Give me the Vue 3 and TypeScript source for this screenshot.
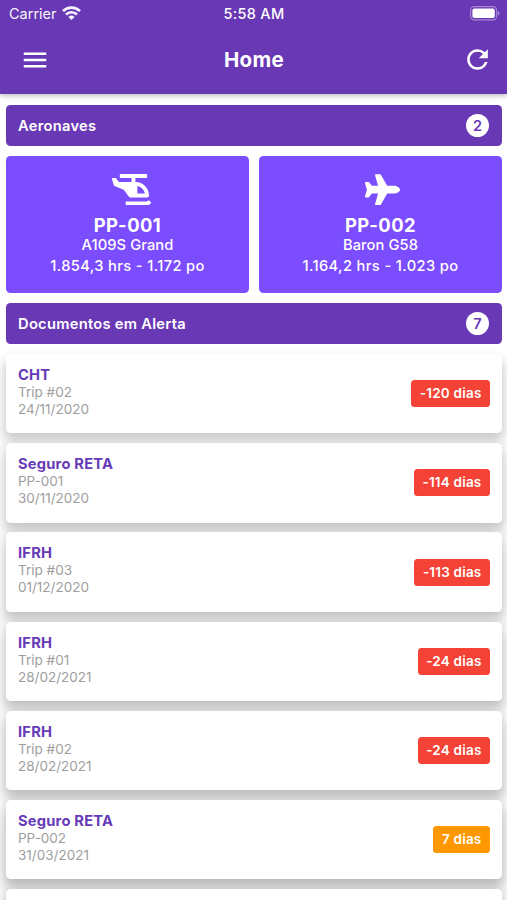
<script setup lang="ts">
interface Aircraft {
  id: string
  model: string
  usage: string
  kind: 'helicopter' | 'plane'
  viewBox: string
  width: number
  icon: string
}

interface AlertDocument {
  title: string
  owner: string
  date: string
  days: string
  level: 'expired' | 'warning'
}

const helicopter =
  'M304 384h272c17.67 0 32-14.33 32-32 0-123.71-100.29-224-224-224V64h176c8.84 0 16-7.16 16-16V16c0-8.84-7.16-16-16-16H144c-8.84 0-16 7.16-16 16v32c0 8.84 7.16 16 16 16h176v64H112L68.8 70.4C65.78 66.37 61.03 64 56 64H16.01C5.6 64-2.04 73.78.49 83.88L32 192l160 64 86.4 115.2A31.992 31.992 0 0 0 304 384zm112-188.49C478.55 208.3 528.03 257.44 540.79 320H416V195.51zm219.37 263.3l-22.15-22.2c-6.25-6.26-16.24-6.1-22.64.01-7.09 6.77-13.84 11.25-24.64 11.25H240c-8.84 0-16 7.18-16 16.03v32.06c0 8.85 7.16 16.03 16 16.03h325.94c14.88 0 35.3-.47 68.45-29.52 7.02-6.14 7.57-17.05.98-23.66z'
const plane =
  'M480 192H365.71L260.61 8.06A16.014 16.014 0 0 0 246.71 0h-65.5c-10.63 0-18.3 10.17-15.38 20.39L214.86 192H112l-43.2-57.6c-3.02-4.03-7.77-6.4-12.8-6.4H16.01C5.6 128-2.04 137.78.49 147.88L32 256 .49 364.12C-2.04 374.22 5.6 384 16.01 384H56c5.04 0 9.78-2.37 12.8-6.4L112 320h102.86l-49.03 171.6c-2.92 10.22 4.75 20.4 15.38 20.4h65.5c5.74 0 11.04-3.08 13.89-8.06L365.71 320H480c35.35 0 96-28.65 96-64s-60.65-64-96-64z'

const fleet: Aircraft[] = [
  { id: 'PP-001', model: 'A109S Grand', usage: '1.854,3 hrs - 1.172 po', kind: 'helicopter', viewBox: '0 0 640 512', width: 39, icon: helicopter },
  { id: 'PP-002', model: 'Baron G58', usage: '1.164,2 hrs - 1.023 po', kind: 'plane', viewBox: '0 0 576 512', width: 35, icon: plane },
]

const documents: AlertDocument[] = [
  { title: 'CHT', owner: 'Trip #02', date: '24/11/2020', days: '-120 dias', level: 'expired' },
  { title: 'Seguro RETA', owner: 'PP-001', date: '30/11/2020', days: '-114 dias', level: 'expired' },
  { title: 'IFRH', owner: 'Trip #03', date: '01/12/2020', days: '-113 dias', level: 'expired' },
  { title: 'IFRH', owner: 'Trip #01', date: '28/02/2021', days: '-24 dias', level: 'expired' },
  { title: 'IFRH', owner: 'Trip #02', date: '28/02/2021', days: '-24 dias', level: 'expired' },
  { title: 'Seguro RETA', owner: 'PP-002', date: '31/03/2021', days: '7 dias', level: 'warning' },
]

// Shadows deepen slightly the further down the screen a card sits.
const shade = (index: number) => ({ '--shade': (0.13 + index * 0.014).toFixed(3) })
</script>

<template>
  <div class="screen">
    <header class="header">
      <div class="status">
        <div class="carrier">
          <span>Carrier</span>
          <svg class="wifi" width="19" height="14" viewBox="0 0 19 14">
            <g fill="none" stroke="#fff" stroke-width="2.7">
              <path d="M1 5.100a12.200 12.200 0 0 1 17 0" />
              <path d="M4 8.500a7.800 7.800 0 0 1 11 0" />
            </g>
            <path fill="#fff" d="M6.400 10.900a4.500 4.500 0 0 1 6.200 0L9.500 14z" />
          </svg>
        </div>
        <span class="time">5:58 AM</span>
        <svg class="battery" width="30" height="15" viewBox="0 0 30 15">
          <rect x=".6" y=".6" width="26" height="13.300" rx="3.600" fill="none" stroke="#fff" stroke-opacity=".4" stroke-width="1.100" />
          <rect x="2.400" y="2.500" width="22.400" height="9.600" rx="2" fill="#fff" />
          <path d="M27.800 5c2 1 2 3.600 0 4.600z" fill="#fff" fill-opacity=".5" />
        </svg>
      </div>
      <div class="toolbar">
        <svg class="tool" width="30" height="30" viewBox="0 0 24 24"><path d="M3 18h18v-2H3v2zm0-5h18v-2H3v2zm0-7v2h18V6H3z" /></svg>
        <h1>Home</h1>
        <svg class="tool refresh" width="31" height="31" viewBox="0 0 24 24"><path d="M17.650 6.350A7.958 7.958 0 0 0 12 4c-4.420 0-7.990 3.580-7.990 8s3.570 8 7.990 8c3.730 0 6.840-2.550 7.730-6h-2.080A5.990 5.990 0 0 1 12 18c-3.310 0-6-2.690-6-6s2.690-6 6-6c1.660 0 3.140.690 4.220 1.780L13 11h7V4l-2.350 2.350z" /></svg>
      </div>
    </header>

    <main class="content">
      <div class="section">
        <h2>Aeronaves</h2>
        <span class="count">2</span>
      </div>
      <div class="fleet">
        <article v-for="a in fleet" :key="a.id" class="aircraft">
          <svg :class="a.kind" :width="a.width" height="31.4" :viewBox="a.viewBox"><path :d="a.icon" /></svg>
          <h3>{{ a.id }}</h3>
          <p class="model">{{ a.model }}</p>
          <p class="usage">{{ a.usage }}</p>
        </article>
      </div>
      <div class="section">
        <h2>Documentos em Alerta</h2>
        <span class="count">7</span>
      </div>
      <div class="documents">
        <article v-for="(d, i) in documents" :key="i" class="document" :style="shade(i)">
          <div>
            <h4>{{ d.title }}</h4>
            <p>{{ d.owner }}</p>
            <p>{{ d.date }}</p>
          </div>
          <span class="badge" :class="d.level">{{ d.days }}</span>
        </article>
        <article class="document" :style="shade(documents.length)"></article>
      </div>
    </main>
  </div>
</template>

<style>
body {
  background: #fff;
  overflow: hidden;
}
</style>

<style scoped>
.screen {
  height: 900px;
  overflow: hidden;
  background: #fff;
  color: #fff;
  font-family: Inter, 'Liberation Sans', sans-serif;
}
h1, h2, h3, h4, p {
  margin: 0;
}
.header {
  height: 93.800px;
  box-sizing: border-box;
  background: #6938b5;
  box-shadow: 0 2px 5px rgba(0, 0, 0, 0.25);
}
.status {
  display: grid;
  grid-template-columns: 1fr auto 1fr;
  align-items: center;
  height: 27px;
  padding: 0 7px 0 9px;
  font-size: 14.500px;
}
.carrier {
  display: flex;
  align-items: center;
  gap: 5px;
  opacity: 0.95;
}
.wifi {
  margin-top: -2px;
}
.time {
  margin-left: -1px;
  font-weight: 500;
  letter-spacing: 0.300px;
}
.battery {
  justify-self: end;
}
.toolbar {
  display: grid;
  grid-template-columns: 1fr auto 1fr;
  align-items: center;
  height: 65.600px;
  padding: 0 14px 0 20px;
}
.tool {
  fill: #fff;
}
.refresh {
  justify-self: end;
}
h1 {
  margin-left: -5px;
  font-size: 20.500px;
  line-height: 26px;
  font-weight: 700;
  letter-spacing: 0.300px;
}
.content {
  display: flex;
  flex-direction: column;
  gap: 9.700px;
  padding: 11px 5px 0 6px;
}
.section {
  position: relative;
  z-index: 1;
  display: flex;
  align-items: center;
  justify-content: space-between;
  height: 41.700px;
  box-sizing: border-box;
  padding: 0 13px 0 12px;
  border-radius: 4.500px;
  background: #6938b5;
}
h2 {
  font-size: 14.700px;
  line-height: 18px;
  font-weight: 600;
  letter-spacing: 0.280px;
}
.count {
  display: grid;
  place-items: center;
  width: 23px;
  height: 23px;
  border-radius: 50%;
  background: #fff;
  color: #6938b5;
  font-size: 14.500px;
  line-height: 22px;
  font-weight: 600;
}
.fleet {
  display: grid;
  grid-template-columns: 1fr 1fr;
  gap: 10px;
}
.aircraft {
  display: flex;
  flex-direction: column;
  align-items: center;
  height: 136.800px;
  box-sizing: border-box;
  padding-top: 17.600px;
  border-radius: 4.500px;
  background: #7c4dff;
}
.aircraft svg {
  fill: #fff;
}
.helicopter {
  padding-left: 7px;
}
.plane {
  padding-left: 3px;
}
h3 {
  margin-top: 9px;
  font-size: 18.400px;
  line-height: 22px;
  font-weight: 700;
  letter-spacing: 0.450px;
}
.model,
.usage {
  font-size: 14.700px;
  line-height: 18px;
  font-weight: 500;
  letter-spacing: 0.080px;
}
.usage {
  margin-top: 3px;
  letter-spacing: 0.360px;
}
.documents {
  display: flex;
  flex-direction: column;
  gap: 9.900px;
  isolation: isolate;
}
.document {
  position: relative;
  display: flex;
  flex: none;
  justify-content: space-between;
  align-items: center;
  height: 79.300px;
  box-sizing: border-box;
  padding: 0 12px;
  border-radius: 5px;
  background: #fff;
}
/* Painted beneath every card, so a shadow never tints its neighbour. */
.document::before {
  content: '';
  position: absolute;
  inset: 0;
  z-index: -1;
  border-radius: 5px;
  box-shadow:
    0 10px 14px 3px rgba(0, 0, 0, var(--shade)),
    0 4px 8px rgba(0, 0, 0, 0.100);
}
.document > div {
  padding-bottom: 3.400px;
}
h4 {
  font-size: 14.700px;
  line-height: 18px;
  font-weight: 700;
  letter-spacing: 0.200px;
  color: #673ab7;
}
.document p {
  font-size: 13.500px;
  line-height: 17px;
  color: #9e9e9e;
}
.badge {
  height: 27px;
  padding: 0 8.500px;
  border-radius: 3.500px;
  font-size: 13.500px;
  line-height: 26px;
  font-weight: 600;
  letter-spacing: 0.200px;
}
.expired {
  background: #f44336;
}
.warning {
  background: #ff9800;
}
</style>
